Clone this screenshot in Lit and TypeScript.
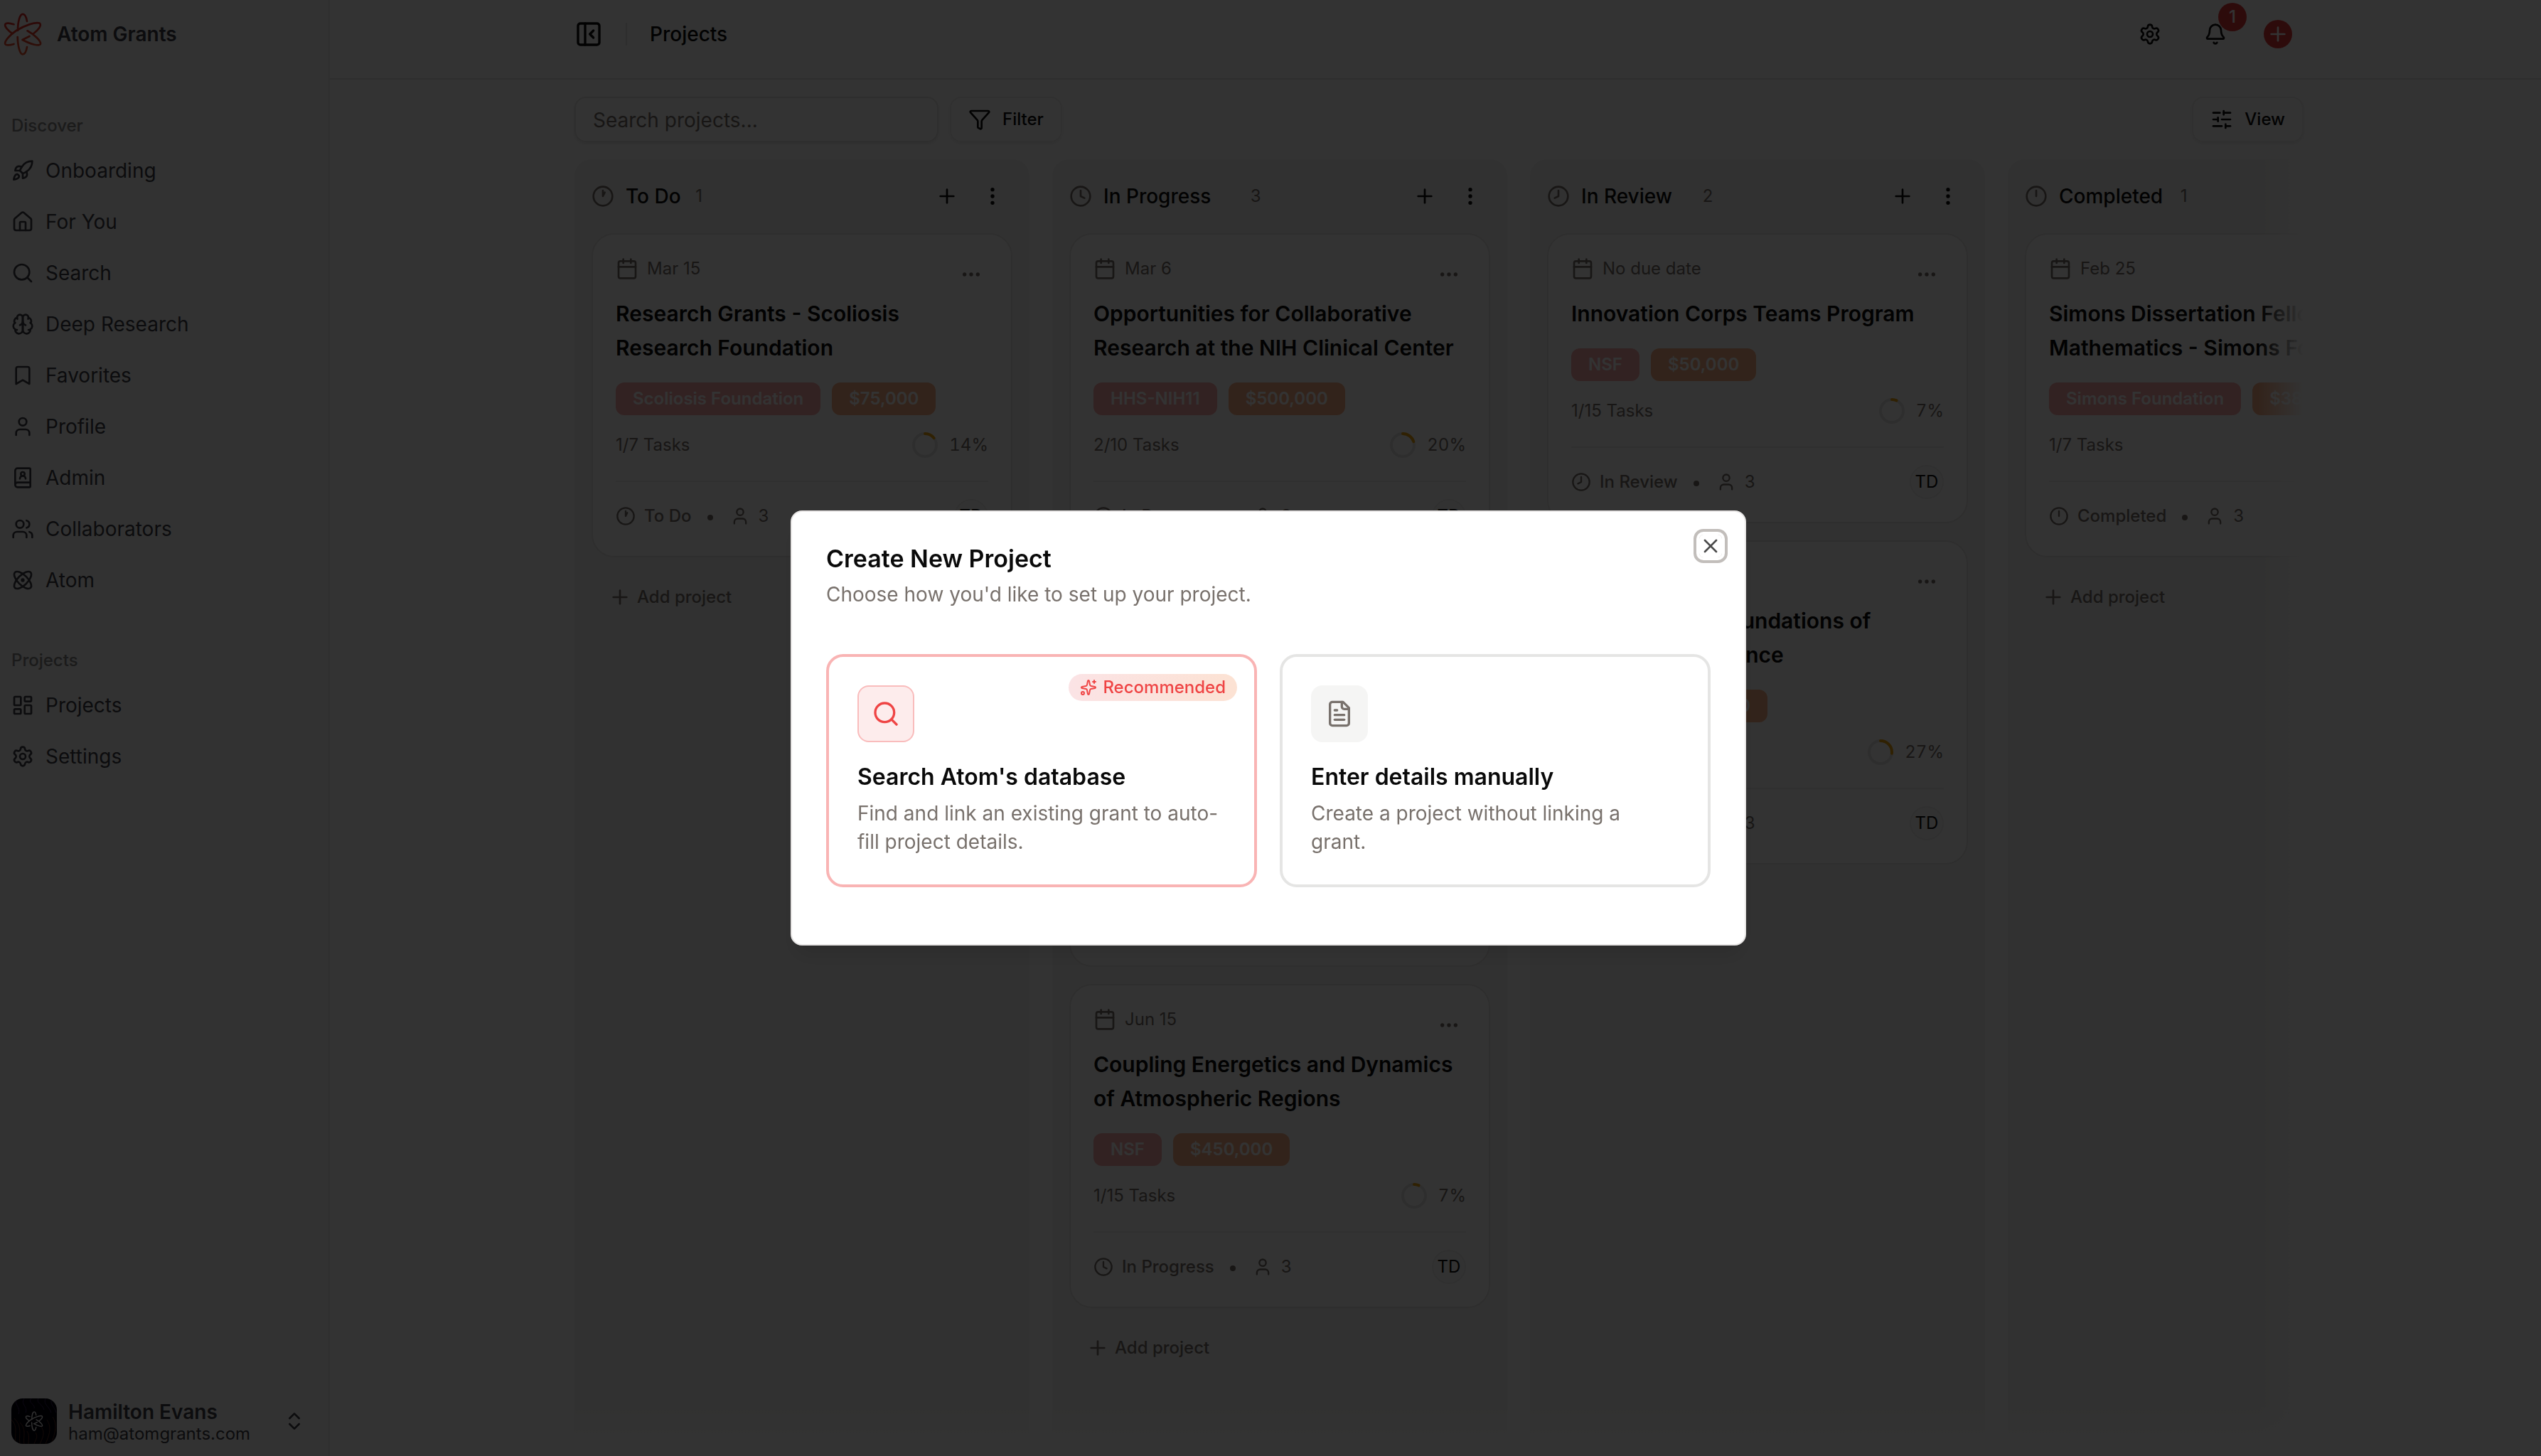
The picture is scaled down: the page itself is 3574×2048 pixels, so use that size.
import { LitElement, html, svg, css, nothing, type TemplateResult } from "lit";
import { customElement, property } from "lit/decorators.js";

/* ---------- icons: 24-unit stroke drawings ---------- */

const gear = svg`<path d="M9.671 4.136a2.34 2.34 0 0 1 4.659 0 2.34 2.34 0 0 0 3.319 1.915 2.34 2.34 0 0 1 2.33 4.033 2.34 2.34 0 0 0 0 3.831 2.34 2.34 0 0 1-2.33 4.033 2.34 2.34 0 0 0-3.319 1.915 2.34 2.34 0 0 1-4.659 0 2.34 2.34 0 0 0-3.32-1.915 2.34 2.34 0 0 1-2.33-4.033 2.34 2.34 0 0 0 0-3.831A2.34 2.34 0 0 1 6.35 6.051a2.34 2.34 0 0 0 3.319-1.915"/><circle cx="12" cy="12" r="3"/>`;
const dial = svg`<circle cx="12" cy="12" r="10"/>`;

const ICONS = {
  rocket: svg`<path d="M4.5 16.5c-1.5 1.26-2 5-2 5s3.74-.5 5-2c.71-.84.7-2.13-.09-2.91a2.18 2.18 0 0 0-2.91-.09z"/><path d="m12 15-3-3a22 22 0 0 1 2-3.95A12.88 12.88 0 0 1 22 2c0 2.72-.78 7.5-6 11a22.35 22.35 0 0 1-4 2z"/><path d="M9 12H4s.55-3.03 2-4c1.62-1.08 5 0 5 0"/><path d="M12 15v5s3.03-.55 4-2c1.08-1.62 0-5 0-5"/>`,
  house: svg`<path d="M15 21v-8a1 1 0 0 0-1-1h-4a1 1 0 0 0-1 1v8"/><path d="M3 10a2 2 0 0 1 .709-1.528l7-5.999a2 2 0 0 1 2.582 0l7 5.999A2 2 0 0 1 21 10v9a2 2 0 0 1-2 2H5a2 2 0 0 1-2-2z"/>`,
  search: svg`<circle cx="11" cy="11" r="8"/><path d="m21 21-4.3-4.3"/>`,
  brain: svg`<path d="M12 5a3 3 0 1 0-5.997.125 4 4 0 0 0-2.526 5.77 4 4 0 0 0 .556 6.588A4 4 0 1 0 12 18Z"/><path d="M12 5a3 3 0 1 1 5.997.125 4 4 0 0 1 2.526 5.77 4 4 0 0 1-.556 6.588A4 4 0 1 1 12 18Z"/><path d="M15 13a4.5 4.5 0 0 1-3-4 4.5 4.5 0 0 1-3 4"/><path d="M17.599 6.5a3 3 0 0 0 .399-1.375"/><path d="M6.003 5.125A3 3 0 0 0 6.401 6.5"/><path d="M3.477 10.896a4 4 0 0 1 .585-.396"/><path d="M19.938 10.5a4 4 0 0 1 .585.396"/><path d="M6 18a4 4 0 0 1-1.967-.516"/><path d="M19.967 17.484A4 4 0 0 1 18 18"/>`,
  bookmark: svg`<path d="m19 21-7-4-7 4V5a2 2 0 0 1 2-2h10a2 2 0 0 1 2 2v16z"/>`,
  user: svg`<path d="M19 21v-2a4 4 0 0 0-4-4H9a4 4 0 0 0-4 4v2"/><circle cx="12" cy="7" r="4"/>`,
  bookUser: svg`<path d="M15 13a3 3 0 1 0-6 0"/><path d="M4 19.5v-15A2.5 2.5 0 0 1 6.5 2H19a1 1 0 0 1 1 1v18a1 1 0 0 1-1 1H6.5a1 1 0 0 1 0-5H20"/><circle cx="12" cy="8" r="2"/>`,
  users: svg`<path d="M16 21v-2a4 4 0 0 0-4-4H6a4 4 0 0 0-4 4v2"/><circle cx="9" cy="7" r="4"/><path d="M22 21v-2a4 4 0 0 0-3-3.87"/><path d="M16 3.13a4 4 0 0 1 0 7.75"/>`,
  atom: svg`<circle cx="12" cy="12" r="1"/><path d="M20.2 20.2c2.04-2.03.02-7.36-4.5-11.9-4.54-4.52-9.87-6.54-11.9-4.5-2.04 2.03-.02 7.36 4.5 11.9 4.54 4.52 9.87 6.54 11.9 4.5Z"/><path d="M15.7 15.7c4.52-4.54 6.54-9.87 4.5-11.9-2.03-2.04-7.36-.02-11.9 4.5-4.52 4.54-6.54 9.87-4.5 11.9 2.03 2.04 7.36.02 11.9-4.5Z"/>`,
  dashboard: svg`<rect width="7" height="9" x="3" y="3" rx="1"/><rect width="7" height="5" x="14" y="3" rx="1"/><rect width="7" height="9" x="14" y="12" rx="1"/><rect width="7" height="5" x="3" y="16" rx="1"/>`,
  gear,
  panel: svg`<rect width="18" height="18" x="3" y="3" rx="2"/><path d="M9 3v18"/><path d="m16 15-3-3 3-3"/>`,
  bell: svg`<path d="M10.268 21a2 2 0 0 0 3.464 0"/><path d="M3.262 15.326A1 1 0 0 0 4 17h16a1 1 0 0 0 .74-1.673C19.41 13.956 18 12.499 18 8A6 6 0 0 0 6 8c0 4.499-1.411 5.956-2.738 7.326"/>`,
  funnel: svg`<path d="M10 20a1 1 0 0 0 .553.895l2 1A1 1 0 0 0 14 21v-7a2 2 0 0 1 .517-1.341L21.74 4.67A1 1 0 0 0 21 3H3a1 1 0 0 0-.742 1.67l7.225 7.989A2 2 0 0 1 10 14z"/>`,
  sliders: svg`<path d="M10 5H3"/><path d="M12 19H3"/><path d="M14 3v4"/><path d="M16 17v4"/><path d="M21 12h-9"/><path d="M21 19h-5"/><path d="M21 5h-7"/><path d="M8 10v4"/><path d="M8 12H3"/>`,
  plus: svg`<path d="M5 12h14"/><path d="M12 5v14"/>`,
  dotsV: svg`<circle cx="12" cy="12" r="1"/><circle cx="12" cy="5" r="1"/><circle cx="12" cy="19" r="1"/>`,
  dotsH: svg`<circle cx="12" cy="12" r="1"/><circle cx="19" cy="12" r="1"/><circle cx="5" cy="12" r="1"/>`,
  calendar: svg`<path d="M8 2v4"/><path d="M16 2v4"/><rect width="18" height="18" x="3" y="4" rx="2"/><path d="M3 10h18"/>`,
  clock1: svg`${dial}<path d="M12 6v6l2-4"/>`,
  clock4: svg`${dial}<path d="M12 6v6l4 2"/>`,
  clock8: svg`${dial}<path d="M12 6v6l-4 2"/>`,
  clock12: svg`${dial}<path d="M12 6v6"/>`,
  sparkles: svg`<path d="M11.017 2.814a1 1 0 0 1 1.966 0l1.051 5.558a2 2 0 0 0 1.594 1.594l5.558 1.051a1 1 0 0 1 0 1.966l-5.558 1.051a2 2 0 0 0-1.594 1.594l-1.051 5.558a1 1 0 0 1-1.966 0l-1.051-5.558a2 2 0 0 0-1.594-1.594l-5.558-1.051a1 1 0 0 1 0-1.966l5.558-1.051a2 2 0 0 0 1.594-1.594z"/><path d="M20 2v4"/><path d="M22 4h-4"/><circle cx="4" cy="20" r="2"/>`,
  file: svg`<path d="M15 2H6a2 2 0 0 0-2 2v16a2 2 0 0 0 2 2h12a2 2 0 0 0 2-2V7Z"/><path d="M14 2v4a2 2 0 0 0 2 2h4"/><path d="M10 9H8"/><path d="M16 13H8"/><path d="M16 17H8"/>`,
  chevrons: svg`<path d="m7 15 5 5 5-5"/><path d="m7 9 5-5 5 5"/>`,
  close: svg`<path d="M18 6 6 18"/><path d="m6 6 12 12"/>`,
};
type IconName = keyof typeof ICONS;

const icon = (name: IconName, size = 32) => html`<svg
  width=${size} height=${size} viewBox="0 0 24 24" fill="none" stroke="currentColor"
  stroke-width="2" stroke-linecap="round" stroke-linejoin="round" aria-hidden="true"
>${ICONS[name]}</svg>`;

const orbits = svg`
  <path d="M38 30C37 23.500 34.500 19.800 32 19.800C28 19.800 25 30 25 43"/>
  <path d="M24.700 52C25 65 28 76.300 32 76.300C35 76.300 37 72 38 66"/>
  <path d="M19.500 34.200C13 32 7.800 32 7.200 34.500C6.500 37.500 11 43 17.500 47.300"/>
  <path d="M19.500 62C13 64 7.800 64 7.200 61.500C6.500 58 13 49.500 23 43C34 36 50 30.500 55.500 32.500C59.500 35 54 42 46.500 47.800"/>
  <path d="M38.500 43.300C48 48.500 57.500 57 57 61.500C56 66 43 62 31.500 56L41.500 51"/>`;

/* ---------- data ---------- */

interface Project {
  due: string;
  title: string;
  funder: string;
  amount: string;
  done: number;
  total: number;
  members: number;
}
interface Column {
  name: string;
  icon: IconName;
  projects: Project[];
}

const NAV: { label: string; items: [IconName, string][] }[] = [
  {
    label: "Discover",
    items: [
      ["rocket", "Onboarding"],
      ["house", "For You"],
      ["search", "Search"],
      ["brain", "Deep Research"],
      ["bookmark", "Favorites"],
      ["user", "Profile"],
      ["bookUser", "Admin"],
      ["users", "Collaborators"],
      ["atom", "Atom"],
    ],
  },
  {
    label: "Projects",
    items: [
      ["dashboard", "Projects"],
      ["gear", "Settings"],
    ],
  },
];

const COLUMNS: Column[] = [
  {
    name: "To Do",
    icon: "clock1",
    projects: [
      { due: "Mar 15", title: "Research Grants - Scoliosis Research Foundation", funder: "Scoliosis Foundation", amount: "$75,000", done: 1, total: 7, members: 3 },
    ],
  },
  {
    name: "In Progress",
    icon: "clock4",
    projects: [
      { due: "Mar 6", title: "Opportunities for Collaborative Research at the NIH Clinical Center", funder: "HHS-NIH11", amount: "$500,000", done: 2, total: 10, members: 3 },
      { due: "Apr 30", title: "Collaborative Research in Computational Neuroscience: Innovative Approaches to Science and Engineering", funder: "NSF", amount: "$250,000", done: 2, total: 15, members: 3 },
      { due: "Jun 15", title: "Coupling Energetics and Dynamics of Atmospheric Regions", funder: "NSF", amount: "$450,000", done: 1, total: 15, members: 3 },
    ],
  },
  {
    name: "In Review",
    icon: "clock8",
    projects: [
      { due: "No due date", title: "Innovation Corps Teams Program", funder: "NSF", amount: "$50,000", done: 1, total: 15, members: 3 },
      { due: "No due date", title: "Mathematical Foundations of Artificial Intelligence", funder: "NSF", amount: "$500,000", done: 4, total: 15, members: 3 },
    ],
  },
  {
    name: "Completed",
    icon: "clock12",
    projects: [
      { due: "Feb 25", title: "Simons Dissertation Fellowship in Mathematics - Simons Foundation", funder: "Simons Foundation", amount: "$38,000", done: 1, total: 7, members: 3 },
    ],
  },
];

const base = css`
  * {
    box-sizing: border-box;
  }
  h1, h2, h3, p, ul {
    margin: 0;
    padding: 0;
    font-size: inherit;
    font-weight: inherit;
    list-style: none;
  }
  button, input {
    font: inherit;
    color: inherit;
    background: none;
    border: 0;
    padding: 0;
    margin: 0;
    text-align: left;
  }
  a {
    color: inherit;
    text-decoration: none;
  }
  svg {
    display: block;
    flex: none;
  }
`;

/* ---------- project card ---------- */

@customElement("project-card")
export class ProjectCard extends LitElement {
  @property({ attribute: false }) project!: Project;
  @property() status = "";
  @property() statusIcon: IconName = "clock1";

  static styles = [
    base,
    css`
      :host {
        display: block;
      }
      .card {
        border: 2px solid #e7e5e4;
        border-radius: 32px;
        background: #fff;
        padding: 32px;
        color: #78716c;
        font-size: 24px;
        line-height: 32px;
      }
      .top {
        display: flex;
        justify-content: space-between;
        align-items: flex-start;
      }
      .due {
        display: flex;
        align-items: center;
        gap: 12px;
      }
      .more {
        display: grid;
        place-items: center;
        width: 48px;
        height: 48px;
      }
      .title {
        margin-top: 7px;
        font-size: 30px;
        line-height: 48px;
        font-weight: 600;
        color: #0a0a0a;
      }
      .tags {
        display: flex;
        gap: 16px;
        margin-top: 25px;
      }
      .tag {
        padding: 8px 24px;
        border-radius: 12px;
        background: #fba9a9;
        color: #fff;
        font-weight: 600;
        line-height: 30px;
        white-space: nowrap;
      }
      .amount {
        background: #fbb087;
      }
      .tasks {
        display: flex;
        justify-content: space-between;
        align-items: center;
        height: 36px;
        margin-top: 24px;
      }
      .progress {
        display: flex;
        align-items: center;
        gap: 16px;
        font-variant-numeric: tabular-nums;
      }
      .track {
        stroke: #e7e5e4;
      }
      .arc {
        stroke: #f0a30a;
      }
      .foot {
        display: flex;
        align-items: center;
        margin-top: 32px;
        padding-top: 24px;
        border-top: 2px solid #efeeed;
      }
      .status {
        display: flex;
        align-items: center;
        gap: 12px;
        font-weight: 500;
      }
      .dot {
        width: 8px;
        height: 8px;
        margin: 4px 24px 0 22px;
        border-radius: 50%;
        background: currentColor;
      }
      .members {
        display: flex;
        align-items: center;
        gap: 12px;
      }
      .avatar {
        display: grid;
        place-items: center;
        width: 48px;
        height: 48px;
        margin-left: auto;
        border: 2px solid #efeeed;
        border-radius: 50%;
        background: #fafaf9;
        color: #0a0a0a;
      }
    `,
  ];

  render() {
    const p = this.project;
    const share = p.done / p.total;
    const length = 2 * Math.PI * 16;
    return html`
      <article class="card">
        <div class="top">
          <span class="due">${icon("calendar")}${p.due}</span>
          <button class="more" type="button" aria-label="Project options">${icon("dotsH")}</button>
        </div>
        <h3 class="title">${p.title}</h3>
        <div class="tags">
          <span class="tag">${p.funder}</span>
          <span class="tag amount">${p.amount}</span>
        </div>
        <div class="tasks">
          <span>${p.done}/${p.total} Tasks</span>
          <span class="progress">
            <svg width="36" height="36" viewBox="0 0 36 36" fill="none" stroke-width="4" aria-hidden="true">
              <circle class="track" cx="18" cy="18" r="16" />
              <circle class="arc" cx="18" cy="18" r="16" stroke-linecap="round"
                stroke-dasharray="${length * share} ${length}" transform="rotate(-90 18 18)" />
            </svg>
            ${Math.round(share * 100)}%
          </span>
        </div>
        <div class="foot">
          <span class="status">${icon(this.statusIcon, 28)}${this.status}</span>
          <span class="dot"></span>
          <span class="members">${icon("user", 28)}${p.members}</span>
          <span class="avatar">TD</span>
        </div>
      </article>
    `;
  }
}

/* ---------- dialog ---------- */

@customElement("create-project-dialog")
export class CreateProjectDialog extends LitElement {
  static styles = [
    base,
    css`
      :host {
        position: fixed;
        inset: 0;
        display: flex;
        align-items: center;
        justify-content: center;
        padding-right: 6px;
        background: rgba(0, 0, 0, 0.8);
      }
      .dialog {
        position: relative;
        width: 1344px;
        max-width: 100%;
        padding: 48px 48px 80px;
        border: 2px solid #e7e5e4;
        border-radius: 16px;
        background: #fff;
        box-shadow: 0 20px 30px -6px rgba(0, 0, 0, 0.1), 0 8px 12px -8px rgba(0, 0, 0, 0.1);
        font-size: 28px;
        line-height: 40px;
        color: #78716c;
      }
      .heading {
        font-size: 34px;
        line-height: 36px;
        font-weight: 600;
        color: #0a0a0a;
      }
      .lead {
        margin-top: 12px;
      }
      .close {
        position: absolute;
        top: 32px;
        right: 32px;
        width: 32px;
        height: 32px;
        border-radius: 6px;
        color: #4b4b4b;
        box-shadow: 0 0 0 4px #fff, 0 0 0 8px #c2bebb;
      }
      .options {
        display: grid;
        grid-template-columns: 1fr 1fr;
        gap: 32px;
        margin-top: 64px;
      }
      .option {
        position: relative;
        display: flex;
        flex-direction: column;
        align-items: flex-start;
        padding: 40px;
        border: 4px solid #e5e5e4;
        border-radius: 24px;
      }
      .featured {
        border-color: #f9b4b4;
      }
      .tile {
        display: grid;
        place-items: center;
        width: 80px;
        height: 80px;
        border-radius: 16px;
        background: #f5f5f4;
      }
      .featured .tile {
        border: 2px solid #f9bcbc;
        background: #fdecec;
        color: #ef4444;
      }
      .name {
        margin-top: 25px;
        font-size: 32px;
        line-height: 48px;
        font-weight: 600;
        color: #0a0a0a;
      }
      .text {
        margin-top: 7px;
      }
      .badge {
        position: absolute;
        top: 24px;
        right: 24px;
        display: flex;
        align-items: center;
        gap: 8px;
        padding: 4px 16px;
        border-radius: 20px;
        background: linear-gradient(90deg, #fbe3e5, #fce2d3);
        color: #ef4444;
        font-size: 24px;
        line-height: 30px;
        font-weight: 500;
      }
    `,
  ];

  private option(name: string, text: string, glyph: IconName, featured: boolean) {
    return html`
      <button class="option ${featured ? "featured" : ""}" type="button">
        <span class="tile">${icon(glyph, 40)}</span>
        ${featured ? html`<span class="badge">${icon("sparkles", 24)}Recommended</span>` : nothing}
        <span class="name">${name}</span>
        <span class="text">${text}</span>
      </button>
    `;
  }

  render() {
    return html`
      <section class="dialog" role="dialog" aria-modal="true" aria-labelledby="heading">
        <h2 class="heading" id="heading">Create New Project</h2>
        <p class="lead">Choose how you'd like to set up your project.</p>
        <button class="close" type="button" aria-label="Close">${icon("close")}</button>
        <div class="options">
          ${this.option("Search Atom's database", "Find and link an existing grant to auto-fill project details.", "search", true)}
          ${this.option("Enter details manually", "Create a project without linking a grant.", "file", false)}
        </div>
      </section>
    `;
  }
}

/* ---------- page ---------- */

@customElement("app-root")
export class AppRoot extends LitElement {
  static styles = [
    base,
    css`
      :host {
        display: block;
        font-family: Inter, "Liberation Sans", sans-serif;
        font-size: 28px;
        line-height: 40px;
        color: #0a0a0a;
        background: #fff;
      }
      .page {
        display: flex;
        height: 100vh;
        overflow: hidden;
      }

      .sidebar {
        display: flex;
        flex-direction: column;
        flex: none;
        width: 464px;
        border-right: 2px solid #ececeb;
        background: #fafafa;
        color: #3f3f46;
      }
      .brand {
        display: flex;
        align-items: center;
        gap: 16px;
        height: 96px;
        font-weight: 600;
      }
      .nav {
        display: flex;
        flex-direction: column;
        gap: 48px;
        padding: 48px 16px 0;
      }
      .label {
        height: 64px;
        font-size: 24px;
        line-height: 66px;
        font-weight: 500;
        color: #858585;
      }
      .links {
        display: flex;
        flex-direction: column;
        gap: 8px;
      }
      .link {
        display: flex;
        align-items: center;
        gap: 16px;
        height: 64px;
      }
      .account {
        display: flex;
        align-items: center;
        gap: 16px;
        margin-top: auto;
        padding: 16px;
      }
      .photo {
        border-radius: 16px;
      }
      .who {
        display: flex;
        flex-direction: column;
        flex: 1;
        font-size: 24px;
        line-height: 30px;
        padding-top: 4px;
      }
      .person {
        font-size: 28px;
        line-height: 32px;
        font-weight: 600;
      }
      .switch {
        margin-right: 16px;
      }

      .main {
        display: flex;
        flex-direction: column;
        flex: 1;
        min-width: 0;
      }
      .bar {
        padding-left: 10px;
        border-bottom: 2px solid #e7e5e4;
      }
      .wrap {
        width: 100%;
        max-width: 2432px;
        margin: 0 auto;
      }
      .header {
        display: flex;
        align-items: center;
        height: 110px;
        padding: 0 16px 14px 0;
      }
      .rule {
        width: 2px;
        height: 32px;
        margin: 0 32px;
        background: #e7e5e4;
      }
      .crumb {
        font-weight: 500;
      }
      .actions {
        display: flex;
        align-items: center;
        gap: 28px;
        margin-left: auto;
      }
      .action {
        position: relative;
        display: grid;
        place-items: center;
        width: 64px;
        height: 64px;
      }
      .count {
        position: absolute;
        right: -12px;
        top: -12px;
        width: 40px;
        height: 40px;
        border-radius: 50%;
        background: #e23b3b;
        color: #fff;
        font-size: 24px;
        font-weight: 500;
        text-align: center;
      }
      .create {
        display: grid;
        place-items: center;
        width: 40px;
        height: 40px;
        margin-left: 8px;
        border-radius: 50%;
        background: #e23b3b;
        color: #fff;
      }

      .content {
        display: flex;
        flex: 1;
        min-height: 0;
        padding: 24px 0 16px 10px;
      }
      .board-area {
        display: flex;
        flex-direction: column;
        gap: 24px;
      }
      .toolbar {
        display: flex;
        gap: 16px;
      }
      .find {
        width: 512px;
        height: 64px;
        padding: 2px 24px 0;
        border: 2px solid #e7e5e4;
        border-radius: 16px;
        box-shadow: 0 2px 4px rgba(0, 0, 0, 0.1);
      }
      .find::placeholder {
        color: #78716c;
        opacity: 1;
      }
      .tool {
        display: flex;
        align-items: center;
        gap: 16px;
        height: 64px;
        padding: 0 24px;
        border: 2px solid #efeeed;
        border-radius: 16px;
        font-size: 24px;
        font-weight: 500;
        box-shadow: 0 2px 4px rgba(0, 0, 0, 0.08);
      }
      .view {
        margin-left: auto;
      }
      .board {
        position: relative;
        display: flex;
        flex: 1;
        gap: 32px;
        min-height: 0;
        overflow: hidden;
      }
      .fade-right {
        position: absolute;
        inset: 0 0 0 auto;
        width: 64px;
        background: linear-gradient(90deg, rgba(255, 255, 255, 0), #fff);
      }
      .fade-bottom {
        position: absolute;
        inset: auto 0 0 0;
        height: 56px;
        background: linear-gradient(rgba(255, 255, 255, 0), #fff);
      }
      .column {
        display: flex;
        flex-direction: column;
        gap: 24px;
        flex: none;
        width: 640px;
        padding: 24px;
        border-radius: 24px 24px 0 0;
        background: #f5f5f4;
      }
      .column-head {
        display: flex;
        align-items: center;
        height: 56px;
        color: #78716c;
      }
      .column-name {
        margin: 0 8px 0 16px;
        font-weight: 500;
        color: #0a0a0a;
        white-space: nowrap;
      }
      .tally {
        font-size: 24px;
      }
      .column-actions {
        display: flex;
        gap: 8px;
        margin-left: auto;
        color: #0a0a0a;
      }
      .small {
        display: grid;
        place-items: center;
        width: 56px;
        height: 56px;
      }
      .add {
        display: flex;
        align-items: center;
        gap: 8px;
        height: 64px;
        padding: 0 24px;
        font-size: 24px;
        font-weight: 500;
        color: #78716c;
      }
    `,
  ];

  private sidebar() {
    return html`
      <aside class="sidebar">
        <div class="brand">
          <svg width="64" height="96" viewBox="0 0 64 96" fill="none" stroke="url(#brand)"
            stroke-width="2.7" stroke-linecap="round" stroke-linejoin="round" aria-hidden="true">
            <defs>
              <linearGradient id="brand" gradientUnits="userSpaceOnUse" x1="32" y1="19" x2="32" y2="77">
                <stop offset="0" stop-color="#dc2626" />
                <stop offset="1" stop-color="#e8552f" />
              </linearGradient>
            </defs>
            ${orbits}
          </svg>
          Atom Grants
        </div>
        <nav class="nav">
          ${NAV.map(
            (group) => html`
              <div>
                <h2 class="label">${group.label}</h2>
                <ul class="links">
                  ${group.items.map(([glyph, text]) => html`<li><a class="link" href="#">${icon(glyph)}${text}</a></li>`)}
                </ul>
              </div>
            `,
          )}
        </nav>
        <button class="account" type="button">
          <svg class="photo" width="64" height="64" viewBox="0 0 64 64" fill="none" aria-hidden="true">
            <rect width="64" height="64" fill="#05030f" />
            <g stroke-width="1" opacity="0.5">
              <path stroke="#6b3fa0" d="M8 0c-6 8 6 12 2 22M18 0c-6 8 6 12 2 20M28 0c-6 6 6 8 4 14M38 0c-4 6 6 8 8 16M48 0c-4 8 6 12 8 20M57 0c-4 8 4 12 6 20" />
              <path stroke="#b0562f" d="M0 30c10 10 4 20 6 34M4 28c12 12 6 22 8 36M12 34c10 10 4 20 6 30M22 46c4 6 2 12 2 18M34 48c4 6 0 10-2 16M42 40c6 8 2 16-2 24M50 30c8 12 2 24-2 34M58 26c8 12 2 26-2 38" />
            </g>
            <svg x="18" y="16" width="28" height="32" viewBox="2 14 60 68" stroke="#fff" stroke-width="3" stroke-linecap="round">${orbits}</svg>
          </svg>
          <span class="who"><span class="person">Hamilton Evans</span><span>ham@atomgrants.com</span></span>
          <span class="switch">${icon("chevrons")}</span>
        </button>
      </aside>
    `;
  }

  private column(column: Column): TemplateResult {
    return html`
      <section class="column">
        <header class="column-head">
          ${icon(column.icon)}
          <h2 class="column-name" style="width: ${column.name.length}ch">${column.name}</h2>
          <span class="tally">${column.projects.length}</span>
          <div class="column-actions">
            <button class="small" type="button" aria-label="Add to ${column.name}">${icon("plus")}</button>
            <button class="small" type="button" aria-label="${column.name} options">${icon("dotsV")}</button>
          </div>
        </header>
        ${column.projects.map(
          (project) => html`<project-card .project=${project} .status=${column.name} .statusIcon=${column.icon}></project-card>`,
        )}
        <button class="add" type="button">${icon("plus")}Add project</button>
      </section>
    `;
  }

  render() {
    return html`
      <div class="page">
        ${this.sidebar()}
        <main class="main">
          <div class="bar">
            <header class="wrap header">
              <button type="button" aria-label="Collapse sidebar">${icon("panel", 40)}</button>
              <span class="rule"></span>
              <h1 class="crumb">Projects</h1>
              <div class="actions">
                <button class="action" type="button" aria-label="Settings">${icon("gear")}</button>
                <button class="action" type="button" aria-label="Notifications">${icon("bell")}<span class="count">1</span></button>
                <button class="create" type="button" aria-label="Create">${icon("plus")}</button>
              </div>
            </header>
          </div>
          <div class="content">
            <div class="wrap board-area">
              <div class="toolbar">
                <input class="find" type="search" placeholder="Search projects..." aria-label="Search projects" />
                <button class="tool" type="button">${icon("funnel")}Filter</button>
                <button class="tool view" type="button">${icon("sliders")}View</button>
              </div>
              <div class="board">
                ${COLUMNS.map((column) => this.column(column))}
                <div class="fade-right"></div>
                <div class="fade-bottom"></div>
              </div>
            </div>
          </div>
        </main>
      </div>
      <create-project-dialog></create-project-dialog>
    `;
  }
}
